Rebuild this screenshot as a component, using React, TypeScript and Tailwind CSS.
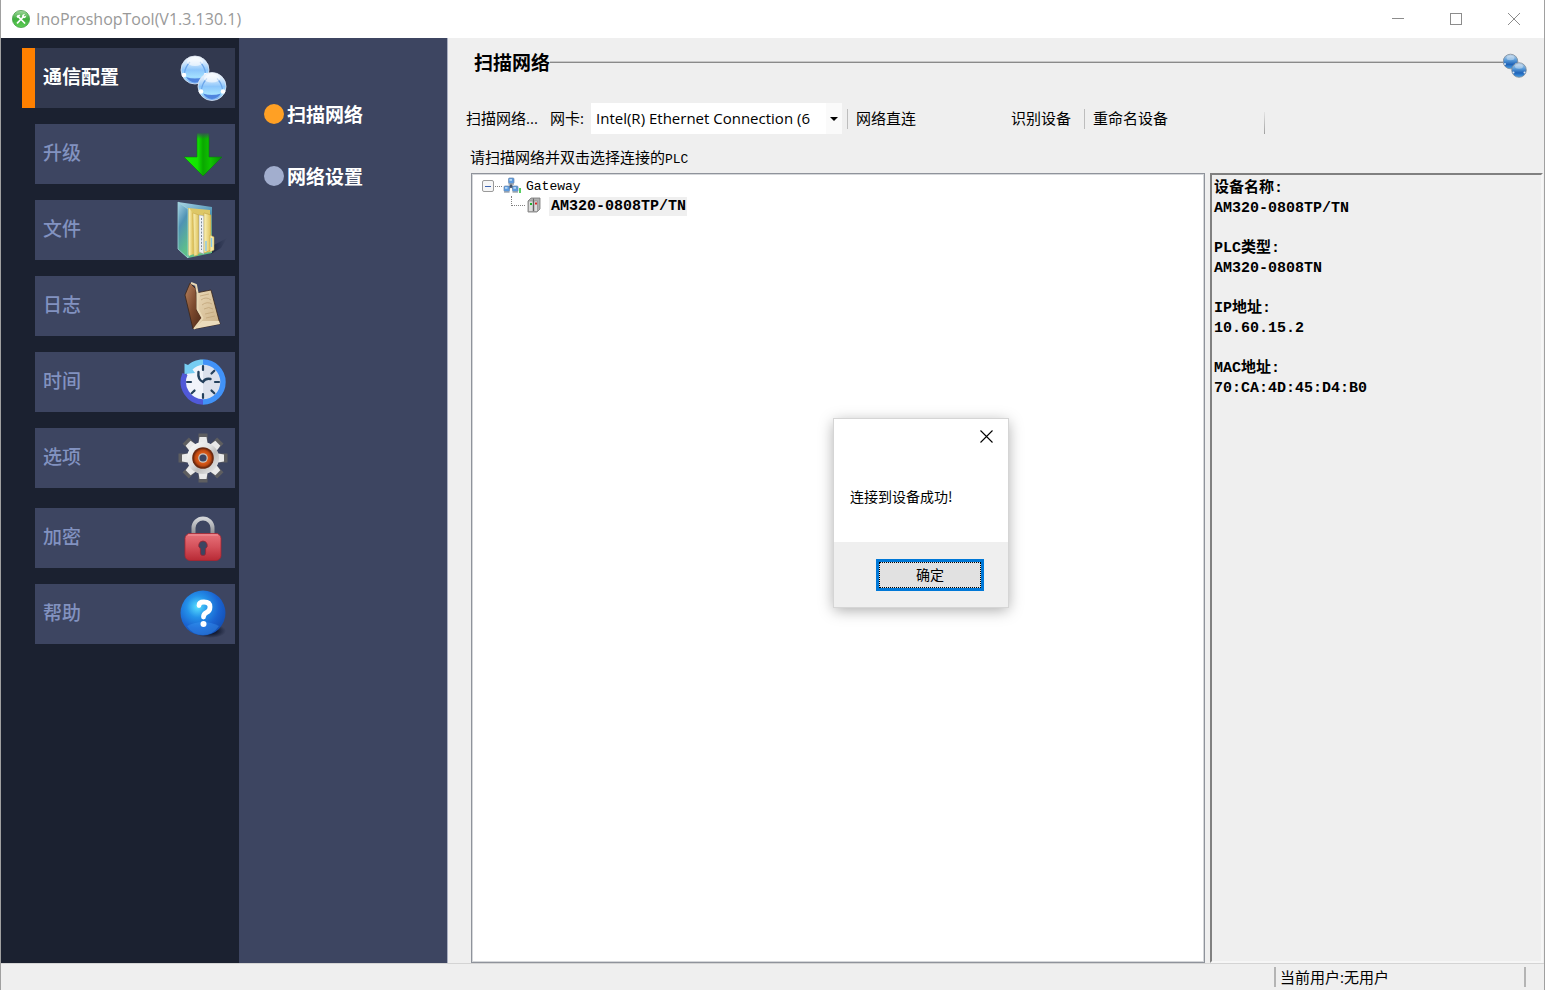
import { useState } from "react";
import type { ReactNode } from "react";

const CJK = "font-['Noto_Sans_CJK_SC',sans-serif]";
const UI = "font-['Open_Sans','Noto_Sans_CJK_SC',sans-serif]";
const MONO = "font-['Liberation_Mono','Noto_Sans_CJK_SC',monospace]";

function AppLogo() {
  return (
    <svg viewBox="0 0 18 18" className="h-[18px] w-[18px]" aria-hidden="true">
      <defs>
        <linearGradient id="logo" x1="0" y1="0" x2="0" y2="1">
          <stop offset="0" stopColor="#a5d9a0" />
          <stop offset="0.5" stopColor="#3fae3f" />
          <stop offset="1" stopColor="#5fd055" />
        </linearGradient>
      </defs>
      <circle cx="9" cy="9" r="8.6" fill="url(#logo)" stroke="#3c9a3f" strokeWidth="0.7" />
      <path d="M5.5 12.8 L11.2 7 M5.8 6.2 L12.6 13" stroke="#fff" strokeWidth="1.7" strokeLinecap="round" />
      <path d="M4.4 6.6 L7.2 4.4 L8.3 5.6 L5.6 8z" fill="#fff" />
      <path d="M10 6.4 a2.4 2.4 0 0 1 3 -2.2 l-1.2 1.4 l1 1 l1.4 -1.1 a2.3 2.3 0 0 1 -2.6 2.6z" fill="#fff" />
    </svg>
  );
}

function GlobesIcon() {
  return (
    <svg viewBox="0 0 50 50" className="h-[50px] w-[50px]" aria-hidden="true">
      <defs>
        <linearGradient id="globe" x1="0" y1="0" x2="0" y2="1">
          <stop offset="0" stopColor="#ffffff" />
          <stop offset="0.25" stopColor="#cfe6fc" />
          <stop offset="0.5" stopColor="#8cc6fb" />
          <stop offset="0.75" stopColor="#a4e0ff" />
          <stop offset="1" stopColor="#6ea4ee" />
        </linearGradient>
      </defs>
      {[
        [17, 17],
        [34, 33.5],
      ].map(([x, y]) => (
        <g key={x} transform={`translate(${x} ${y})`}>
          <circle r="14" fill="url(#globe)" stroke="#dfe9f5" strokeWidth="0.8" />
          <path d="M-5 -8 C-8 -5 -10 -1 -10.5 3 M5 -8 C8 -5 10 -1 10.5 3" stroke="#6ba5ea" strokeWidth="1.2" fill="none" />
          <path d="M-9 7 Q0 10 9 7 Q6 12 0 12.4 Q-6 12 -9 7" fill="#4f84de" />
          <ellipse cy="-8" rx="8" ry="4" fill="#fff" opacity="0.6" />
          <circle cx="-11" cy="5" r="2.3" fill="#fff" />
          <circle cx="11" cy="5" r="2.3" fill="#fff" />
        </g>
      ))}
    </svg>
  );
}

function ArrowIcon() {
  return (
    <svg viewBox="0 0 50 50" className="h-[50px] w-[50px]" aria-hidden="true">
      <defs>
        <linearGradient id="arrow" x1="0" y1="0" x2="1" y2="0">
          <stop offset="0" stopColor="#17f000" />
          <stop offset="0.35" stopColor="#12e400" />
          <stop offset="0.5" stopColor="#0aa800" />
          <stop offset="0.7" stopColor="#10c400" />
          <stop offset="1" stopColor="#078a06" />
        </linearGradient>
        <linearGradient id="arrowFade" x1="0" y1="0" x2="0" y2="1">
          <stop offset="0" stopColor="#3d4561" />
          <stop offset="1" stopColor="#3d4561" stopOpacity="0" />
        </linearGradient>
      </defs>
      <path d="M19 4 H31 V28 H44 L25 47 L6 28 H19z" fill="url(#arrow)" stroke="#0c7a13" strokeWidth="0.6" />
      <rect x="18" y="3" width="14" height="7" fill="url(#arrowFade)" />
    </svg>
  );
}

function FolderIcon() {
  return (
    <svg viewBox="0 0 60 60" className="h-[60px] w-[60px]" aria-hidden="true">
      <defs>
        <linearGradient id="cover" x1="0" y1="0" x2="0.3" y2="1">
          <stop offset="0" stopColor="#a9d4e6" />
          <stop offset="0.45" stopColor="#4f93b4" />
          <stop offset="1" stopColor="#5fc08a" />
        </linearGradient>
        <linearGradient id="sheet" x1="0" y1="0" x2="1" y2="0">
          <stop offset="0" stopColor="#fbf3b8" />
          <stop offset="1" stopColor="#dcbf57" />
        </linearGradient>
        <linearGradient id="cast" x1="0" y1="0" x2="1" y2="0">
          <stop offset="0" stopColor="#1d2740" />
          <stop offset="1" stopColor="#1d2740" stopOpacity="0" />
        </linearGradient>
      </defs>
      <path d="M39 46 L54 38 L48 48 L38 54z" fill="url(#cast)" />
      <path d="M5 2 L39 7 V53 L15 58 L5 49z" fill="url(#cover)" />
      <path d="M15 8 L37 10 V52 L15 55z" fill="#ddc766" />
      <path d="M16 8 L20 13 V54 L16 56z" fill="url(#sheet)" />
      <path d="M20 13 L26 15 V38 L25 55 L21 56z" fill="url(#sheet)" stroke="#c2a243" strokeWidth="0.5" />
      <path d="M26 15 L31 16 V54 L26 52z" fill="#eef2f5" stroke="#98a4a9" strokeWidth="0.5" />
      <path d="M28.5 18 V50" stroke="#7e8b9a" strokeWidth="1" strokeDasharray="2 1.4" />
      <path d="M31 13 L38 15 V50 L31 53z" fill="url(#sheet)" stroke="#b99737" strokeWidth="0.5" />
      <path d="M37 35 L41 37 V50 L37 52z" fill="#f6e9a4" stroke="#c2a243" strokeWidth="0.5" />
      <path d="M33 41 V51 M38.5 38 V47" stroke="#86c8e8" strokeWidth="1.4" />
      <path d="M5 2 L15 9 V58 L5 49z" fill="url(#cover)" stroke="#9fd3d8" strokeWidth="0.8" />
    </svg>
  );
}

function LogIcon() {
  return (
    <svg viewBox="0 0 50 50" className="h-[50px] w-[50px]" aria-hidden="true">
      <defs>
        <linearGradient id="leather" x1="0" y1="0" x2="1" y2="1">
          <stop offset="0" stopColor="#b98460" />
          <stop offset="0.5" stopColor="#7d4a2e" />
          <stop offset="1" stopColor="#4a2817" />
        </linearGradient>
        <linearGradient id="paper" x1="0" y1="0" x2="1" y2="1">
          <stop offset="0" stopColor="#ead9b8" />
          <stop offset="1" stopColor="#cbb085" />
        </linearGradient>
      </defs>
      <path d="M18 12 L33 9 L42 43 L16 48z" fill="url(#paper)" stroke="#3a2416" strokeWidth="0.8" />
      <path d="M22 15 L31 13 M23 19 Q28 15 33 19 M24 24 Q29 20 34 23 M26 28 Q31 25 35 28 M27 33 L36 31 M28 37 L37 35" stroke="#c0a47a" strokeWidth="0.8" fill="none" />
      <path d="M16 48 L42 43 L41 40 L24 40z" fill="#ecdcbc" />
      <path d="M12 2 L18 8 L19 30 L24 37 L15 48 L7 14z" fill="url(#leather)" stroke="#3a2416" strokeWidth="0.8" />
      <path d="M13 2 L18 4 L19.500 12 V28 L24.500 37 L16 48" stroke="#e9d8b5" strokeWidth="2" fill="none" strokeLinejoin="round" />
    </svg>
  );
}

function ClockIcon() {
  return (
    <svg viewBox="0 0 50 50" className="h-[50px] w-[50px]" aria-hidden="true">
      <circle cx="25" cy="25" r="18" fill="#f1f4fb" />
      <path d="M25 7 a18 18 0 0 1 0 36z" fill="#dce1ec" />
      <path d="M25 5 A20 20 0 0 1 25 45" stroke="#4192f8" strokeWidth="5.4" fill="none" />
      <path d="M25 45 A20 20 0 0 1 7 17" stroke="#5059d8" strokeWidth="5.4" fill="none" />
      <path d="M25 2.4 C18 2.4 13 5 10 8 L6.5 6.5 V17 L17 16 L14.5 12.5 C17 10 21 7.8 25 7.8z" fill="#76cdf3" />
      {[0, 45, 90, 135, 180, 225, 270].map((angle) => (
        <path key={angle} d="M25 9 V13" stroke="#24405c" strokeWidth="2.2" strokeLinecap="round" transform={`rotate(${angle} 25 25)`} />
      ))}
      <path d="M20.5 15 Q19.5 22.5 25 25 Q27 21 32.5 22" stroke="#24405c" strokeWidth="2.4" strokeLinecap="round" fill="none" />
    </svg>
  );
}

function GearIcon() {
  const angles = [0, 45, 90, 135, 180, 225, 270, 315];
  return (
    <svg viewBox="0 0 50 50" className="h-[50px] w-[50px]" aria-hidden="true">
      <defs>
        <linearGradient id="steel" x1="0" y1="0" x2="1" y2="1">
          <stop offset="0" stopColor="#ffffff" />
          <stop offset="0.45" stopColor="#dedede" />
          <stop offset="0.6" stopColor="#bdbdbd" />
          <stop offset="1" stopColor="#f2f2f2" />
        </linearGradient>
        <radialGradient id="hub">
          <stop offset="0.4" stopColor="#e8641d" />
          <stop offset="0.8" stopColor="#c04a12" />
          <stop offset="1" stopColor="#7a2c0c" />
        </radialGradient>
      </defs>
      {angles.map((a) => (
        <path key={a} d="M20.5 0.5 H29.5 V9 H20.5z" fill="#5e5e60" transform={`rotate(${a} 25 25)`} />
      ))}
      {angles.map((a) => (
        <path key={a} d="M21.5 4 H28.5 L30 13 H20z" fill="#e9e9e9" transform={`rotate(${a} 25 25)`} />
      ))}
      <circle cx="25" cy="25" r="16" fill="url(#steel)" />
      <circle cx="25" cy="25" r="10.8" fill="#6b2a10" />
      <circle cx="25" cy="25" r="9.6" fill="url(#hub)" />
      <circle cx="25" cy="25" r="4.8" fill="#c9c4c0" />
      <circle cx="25" cy="25" r="3.6" fill="#3d4561" />
    </svg>
  );
}

function LockIcon() {
  return (
    <svg viewBox="0 0 50 50" className="h-[50px] w-[50px]" aria-hidden="true">
      <defs>
        <linearGradient id="lockBody" x1="0" y1="0" x2="0" y2="1">
          <stop offset="0" stopColor="#e8727a" />
          <stop offset="0.5" stopColor="#d4505a" />
          <stop offset="1" stopColor="#b82a35" />
        </linearGradient>
        <linearGradient id="shackle" x1="0" y1="0" x2="0" y2="1">
          <stop offset="0" stopColor="#d3d5d8" />
          <stop offset="1" stopColor="#8b8d92" />
        </linearGradient>
      </defs>
      <path d="M15.500 21 V15 a9.500 9.500 0 0 1 19 0 V21" stroke="url(#shackle)" strokeWidth="4" fill="none" />
      <rect x="7" y="20.500" width="36" height="27" rx="5" fill="url(#lockBody)" stroke="#a82631" strokeWidth="0.8" />
      <path d="M10 22 H40" stroke="#f0959b" strokeWidth="1" />
      <path d="M25 28 a4.300 4.300 0 0 1 2.600 7.700 V40 a2.600 2.600 0 0 1 -5.200 0 V35.700 A4.300 4.300 0 0 1 25 28z" fill="#3d4561" stroke="#9c2430" strokeWidth="0.8" />
    </svg>
  );
}

function HelpIcon() {
  return (
    <svg viewBox="0 0 50 50" className="h-[50px] w-[50px]" aria-hidden="true">
      <defs>
        <radialGradient id="ball" cx="0.38" cy="0.36" r="0.68">
          <stop offset="0" stopColor="#59e0ff" />
          <stop offset="0.35" stopColor="#2492ea" />
          <stop offset="0.7" stopColor="#1a63d0" />
          <stop offset="1" stopColor="#1450b4" />
        </radialGradient>
        <radialGradient id="ballShadow">
          <stop offset="0.3" stopColor="#0b1328" />
          <stop offset="1" stopColor="#0b1328" stopOpacity="0" />
        </radialGradient>
      </defs>
      <ellipse cx="32" cy="42" rx="16" ry="7" fill="url(#ballShadow)" />
      <circle cx="25" cy="24" r="22.500" fill="url(#ball)" />
      <path d="M9 37 Q25 29 41 37 Q35 46 25 46 Q14 46 9 37" fill="#3f9dfa" opacity="0.35" />
      <path d="M21 16.500 Q21 13 26 13 Q32 13 32 18 Q32 22 28.500 23.500 Q25.500 25 25.500 28" stroke="#fff" strokeWidth="4.800" fill="none" strokeLinecap="round" />
      <circle cx="25.500" cy="35" r="3" fill="#fff" />
    </svg>
  );
}

function HeaderGlobes() {
  return (
    <svg viewBox="0 0 24 32" className="h-8 w-6 shrink-0" aria-hidden="true">
      <defs>
        <linearGradient id="smallGlobe" x1="0" y1="0" x2="0" y2="1">
          <stop offset="0" stopColor="#c4d8ea" />
          <stop offset="0.4" stopColor="#5b9dda" />
          <stop offset="0.7" stopColor="#1f63b8" />
          <stop offset="1" stopColor="#4ba4ea" />
        </linearGradient>
      </defs>
      {[
        [7.5, 15.5],
        [16, 24],
      ].map(([x, y]) => (
        <g key={x} transform={`translate(${x} ${y})`}>
          <circle r="7.300" fill="url(#smallGlobe)" stroke="#7f8b99" strokeWidth="0.8" />
          <ellipse cy="-3.500" rx="4" ry="2.200" fill="#fff" opacity="0.35" />
          <circle cx="-5.500" cy="2.500" r="1" fill="#d5e6f6" />
          <circle cx="5.500" cy="2.500" r="1" fill="#d5e6f6" />
        </g>
      ))}
    </svg>
  );
}

function GatewayIcon() {
  return (
    <svg viewBox="0 0 18 18" className="ml-px h-[18px] w-[18px]" aria-hidden="true">
      <path d="M8 5 V9 L4 12 M8 9 L12 12" stroke="#44546a" strokeWidth="2.500" fill="none" />
      {[
        [5.5, 1],
        [1, 9],
        [9.5, 9],
      ].map(([x, y]) => (
        <g key={x}>
          <rect x={x} y={y} width="5.500" height="5.500" rx="1" fill="#5b9be0" stroke="#6a86aa" strokeWidth="0.7" />
          <rect x={x + 1} y={y + 1} width="2.500" height="1.800" fill="#b6d7f6" />
          <path d={`M${x} ${y + 6} h5.500`} stroke="#9aa3ad" strokeWidth="1.400" />
        </g>
      ))}
      <path d="M17 11 V16" stroke="#1fbf2e" strokeWidth="1.500" />
    </svg>
  );
}

function DeviceIcon() {
  return (
    <svg viewBox="0 0 14 16" className="h-4 w-[14px]" aria-hidden="true">
      <path d="M1 4 L4 1 H13 V12 L10 15 H1z" fill="#b0b0b0" stroke="#777" strokeWidth="0.800" />
      <path d="M1.500 4 H6 V14.500 H1.500z M7 4 H10.500 V14.500 H7z" fill="#dcdcdc" stroke="#858585" strokeWidth="0.600" />
      <path d="M6.500 1.500 V14" stroke="#555" strokeWidth="0.800" />
      <rect x="3" y="6" width="2" height="2" fill="#19b02b" />
      <rect x="8" y="5.500" width="2" height="2" fill="#d92b2b" />
    </svg>
  );
}

type NavItem = { label: string; icon: ReactNode };

const NAV_GROUPS: NavItem[][] = [
  [
    { label: "通信配置", icon: <GlobesIcon /> },
    { label: "升级", icon: <ArrowIcon /> },
    { label: "文件", icon: <FolderIcon /> },
    { label: "日志", icon: <LogIcon /> },
    { label: "时间", icon: <ClockIcon /> },
    { label: "选项", icon: <GearIcon /> },
  ],
  [
    { label: "加密", icon: <LockIcon /> },
    { label: "帮助", icon: <HelpIcon /> },
  ],
];

const DEVICE_INFO = [
  { label: "设备名称:", value: "AM320-0808TP/TN" },
  { label: "PLC类型:", value: "AM320-0808TN" },
  { label: "IP地址:", value: "10.60.15.2" },
  { label: "MAC地址:", value: "70:CA:4D:45:D4:B0" },
];

function TitleBar() {
  return (
    <header className="flex h-[38px] shrink-0 items-center bg-white pl-[11px]">
      <AppLogo />
      <h1 className={`ml-[6px] flex-1 pb-px text-base text-[#999999] ${UI}`}>InoProshopTool(V1.3.130.1)</h1>
      <div className="flex pr-px text-[#8c8c8c]">
        <button aria-label="最小化" className="flex h-[38px] w-[58px] items-center justify-center">
          <svg viewBox="0 0 12 12" className="h-3 w-3"><path d="M0 5.500 H12" stroke="currentColor" /></svg>
        </button>
        <button aria-label="最大化" className="flex h-[38px] w-[58px] items-center justify-center">
          <svg viewBox="0 0 12 12" className="h-3 w-3"><rect x="0.500" y="0.500" width="11" height="11" fill="none" stroke="currentColor" /></svg>
        </button>
        <button aria-label="关闭" className="flex h-[38px] w-[58px] items-center justify-center">
          <svg viewBox="0 0 12 12" className="h-3 w-3"><path d="M0 0 L12 12 M12 0 L0 12" stroke="currentColor" /></svg>
        </button>
      </div>
    </header>
  );
}

function Sidebar({ active, onSelect }: { active: string; onSelect: (label: string) => void }) {
  return (
    <nav className="flex w-[238px] shrink-0 flex-col gap-5 bg-[#1b2130] pt-[10px] pr-1 pl-[21px]">
      {NAV_GROUPS.map((group) => (
        <ul key={group[0].label} className="flex flex-col gap-4">
          {group.map(({ label, icon }) => {
            const on = label === active;
            return (
              <li key={label}>
                <button
                  onClick={() => onSelect(label)}
                  className={`flex h-[60px] w-full border-l-[13px] text-left ${on ? "border-[#ff8000]" : "border-transparent"}`}
                >
                  <span
                    className={`flex h-full flex-1 items-center justify-between pl-2 text-[19px] ${
                      on ? "bg-[#32394f] font-bold text-white" : "bg-[#3d4561] font-medium text-[#8292c0]"
                    }`}
                  >
                    <span className="pb-[3px]">{label}</span>
                    <span className="flex w-16 justify-center">{icon}</span>
                  </span>
                </button>
              </li>
            );
          })}
        </ul>
      ))}
    </nav>
  );
}

function SubMenu() {
  return (
    <nav className="w-[209px] shrink-0 border-r border-[#a9aec0] bg-[#3d4561] pt-[60px] pl-[25px]">
      <ul className="flex flex-col gap-[30px]">
        <li>
          <a href="#scan" className="flex h-8 items-center gap-[3px] text-[19px] font-bold text-white">
            <span className="h-5 w-5 rounded-full bg-[#ffa024]" />
            扫描网络
          </a>
        </li>
        <li>
          <a href="#settings" className="flex h-8 items-center gap-[3px] text-[19px] font-bold text-white">
            <span className="h-5 w-5 rounded-full bg-[#a2aece]" />
            网络设置
          </a>
        </li>
      </ul>
    </nav>
  );
}

function Toolbar() {
  return (
    <div className={`mt-[17px] flex h-[31px] items-center pl-[18px] text-[15px] whitespace-nowrap text-black ${UI}`}>
      <button className="w-[84px] text-left">扫描网络...</button>
      <label htmlFor="adapter" className="w-[41px]">网卡:</label>
      <span className="relative h-full w-[251px]">
        <select id="adapter" className="h-full w-full appearance-none bg-white pl-[5px] text-[15px] outline-none">
          <option>Intel(R) Ethernet Connection (6</option>
        </select>
        <span className="pointer-events-none absolute inset-y-0 right-0 flex w-4 items-center justify-center bg-[#fafafa]">
          <svg viewBox="0 0 8 4" className="h-1 w-2" aria-hidden="true"><path d="M0 0 H8 L4 4z" fill="#000" /></svg>
        </span>
      </span>
      <span className="ml-[5px] h-5 w-px bg-[#bdbdbd]" />
      <button className="ml-2 w-[155px] text-left">网络直连</button>
      <button className="text-left">识别设备</button>
      <span className="ml-[13px] h-5 w-px bg-[#bdbdbd]" />
      <button className="ml-2 w-[171px] text-left">重命名设备</button>
      <span className="h-[22px] w-px self-end bg-linear-to-b from-[#e4e4e4] to-[#a0a0a0]" />
    </div>
  );
}

function DeviceTree() {
  return (
    <div className={`flex-1 border border-[#8f939b] bg-white pt-[2px] pl-[10px] text-black inset-shadow-[0_0_0_1px_#d5d7da] ${MONO}`}>
      <ul>
        <li>
          <div className="flex h-5 items-center">
            <button aria-label="折叠" className="flex h-3 w-3 items-center justify-center rounded-xs border border-[#9a9a9a] bg-[#f6f6f6]">
              <span className="h-px w-[6px] bg-[#3d62b0]" />
            </button>
            <span className="ml-px w-[7px] border-t border-dotted border-[#808080]" />
            <GatewayIcon />
            <span className="ml-[5px] pt-px text-[13px]">Gateway</span>
          </div>
          <ul className="pl-[29px]">
            <li className="flex h-5 items-center">
              <span className="h-[10px] w-[14px] self-start border-b border-l border-dotted border-[#808080]" />
              <span className="ml-[2px] pb-[3px]"><DeviceIcon /></span>
              <span className="ml-2 bg-[#efefef] pr-px pl-[2px] text-[15px] leading-[19px] font-bold">AM320-0808TP/TN</span>
            </li>
          </ul>
        </li>
      </ul>
    </div>
  );
}

function DeviceDetails() {
  return (
    <dl className={`flex w-[333px] shrink-0 flex-col gap-5 border-2 border-t-[#808080] border-r-[#f6f6f6] border-b-[#f6f6f6] border-l-[#808080] pt-1 pl-[2px] text-[15px] leading-5 font-bold text-black ${MONO}`}>
      {DEVICE_INFO.map(({ label, value }) => (
        <div key={label}>
          <dt className="h-5">{label}</dt>
          <dd className="h-5">{value}</dd>
        </div>
      ))}
    </dl>
  );
}

function MessageDialog({ onClose }: { onClose: () => void }) {
  return (
    <div
      role="dialog"
      aria-label="提示"
      className="absolute top-[419px] left-[833px] flex h-[188px] w-[174px] flex-col bg-white shadow-[0_3px_14px_rgba(0,0,0,0.35)] outline outline-[#d5d5d5]"
    >
      <div className="flex h-[34px] justify-end">
        <button aria-label="关闭对话框" onClick={onClose} className="flex w-11 items-center justify-center">
          <svg viewBox="0 0 13 13" className="h-[13px] w-[13px]"><path d="M0.500 0.500 L12.500 12.500 M12.500 0.500 L0.500 12.500" stroke="#000" strokeWidth="1.100" /></svg>
        </button>
      </div>
      <p className="flex flex-1 items-center px-4 pb-[2px] text-[14px] whitespace-nowrap text-black">连接到设备成功!</p>
      <div className="flex h-[65px] items-center justify-end bg-[#efefef] pr-6">
        <button onClick={onClose} className="h-8 w-[108px] border-[3px] border-[#0078d7] bg-[#e1e1e1]">
          <span className="flex h-full items-center justify-center border border-dotted border-black text-[14px] text-black">确定</span>
        </button>
      </div>
    </div>
  );
}

export default function App() {
  const [active, setActive] = useState("通信配置");
  const [dialogOpen, setDialogOpen] = useState(true);
  return (
    <div className={`relative flex min-h-screen flex-col border-x border-[#a0a0a0] bg-[#efefef] ${CJK}`}>
      <TitleBar />
      <div className="flex flex-1">
        <Sidebar active={active} onSelect={setActive} />
        <SubMenu />
        <main className="flex min-w-0 flex-1 flex-col">
          <div className="flex h-12 items-center pr-[17px] pl-[26px]">
            <h2 className="text-[19px] font-bold text-black">扫描网络</h2>
            <span className="h-[2px] flex-1 border-b border-[#8a8a8a] bg-[#c8c8c8]" />
            <HeaderGlobes />
          </div>
          <Toolbar />
          <p className="h-[39px] pt-[7px] pl-[22px] text-[15px] leading-8 text-black">
            请扫描网络并双击选择连接的<span className={`text-[13px] ${MONO}`}>PLC</span>
          </p>
          <div className="flex flex-1 gap-[5px] pr-px pl-[23px]">
            <DeviceTree />
            <DeviceDetails />
          </div>
        </main>
      </div>
      <footer className="flex h-[27px] items-center justify-end border-t border-[#d4d4d4] pr-[18px]">
        <p className={`flex h-5 w-[252px] items-center border-x-2 border-[#b4b4b4] pl-1 text-[15px] text-black ${UI}`}>当前用户:无用户</p>
      </footer>
      {dialogOpen && <MessageDialog onClose={() => setDialogOpen(false)} />}
    </div>
  );
}
